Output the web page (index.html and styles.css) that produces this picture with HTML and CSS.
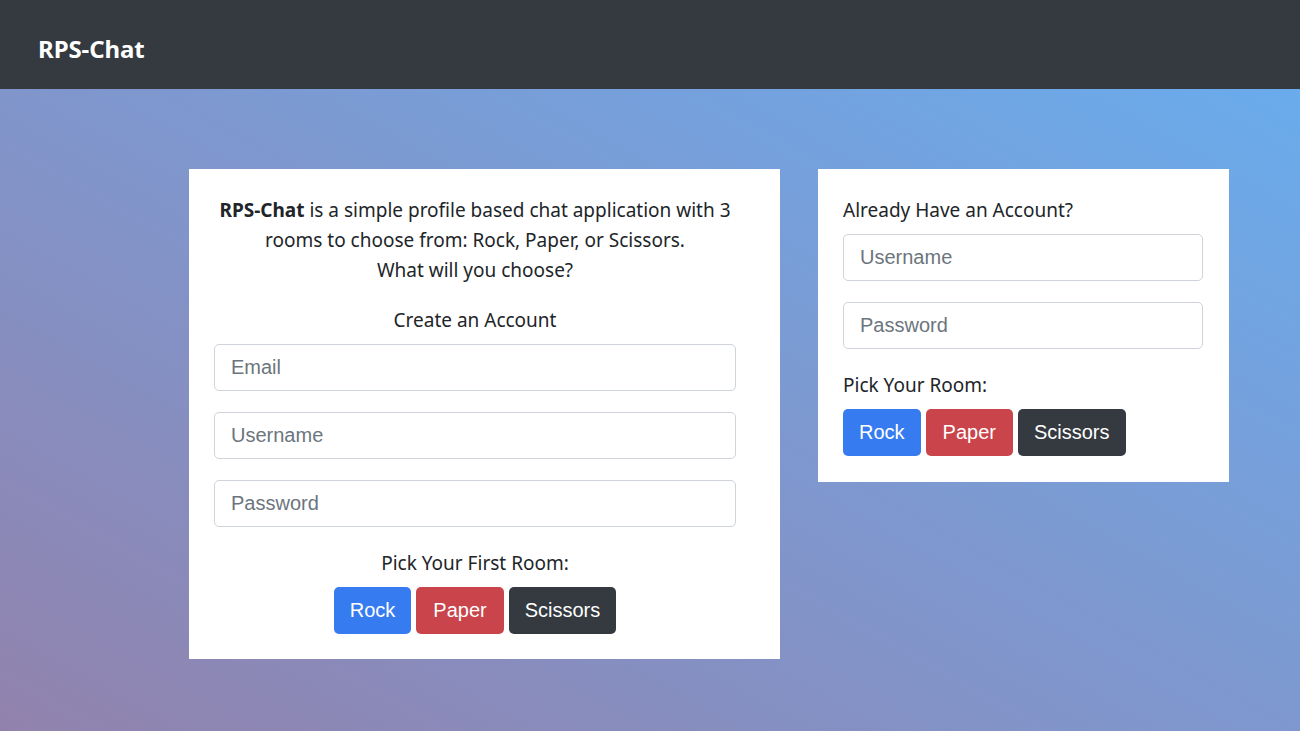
FILE: index.html
```html
<!DOCTYPE html>
<html lang="en">
<head>
<meta charset="utf-8">
<title>RPS-Chat</title>
<link rel="stylesheet" href="styles.css">
</head>
<body>
<nav class="navbar"><span class="brand">RPS-Chat</span></nav>
<main class="main">
  <section class="card card-signup">
    <p class="intro"><strong>RPS-Chat</strong> is a simple profile based chat application with 3 rooms to choose from: Rock, Paper, or Scissors.<br>What will you choose?</p>
    <p class="label center">Create an Account</p>
    <input class="field" type="text" placeholder="Email">
    <input class="field" type="text" placeholder="Username">
    <input class="field" type="password" placeholder="Password">
    <p class="label center label-room">Pick Your First Room:</p>
    <div class="btns center-btns">
      <button class="btn btn-rock">Rock</button>
      <button class="btn btn-paper">Paper</button>
      <button class="btn btn-scissors">Scissors</button>
    </div>
  </section>
  <section class="card card-login">
    <p class="label">Already Have an Account?</p>
    <input class="field" type="text" placeholder="Username">
    <input class="field" type="password" placeholder="Password">
    <p class="label label-room2">Pick Your Room:</p>
    <div class="btns">
      <button class="btn btn-rock">Rock</button>
      <button class="btn btn-paper">Paper</button>
      <button class="btn btn-scissors">Scissors</button>
    </div>
  </section>
</main>
</body>
</html>
```
FILE: styles.css
```css
html, body {
  margin: 0;
  padding: 0;
  height: 100%;
}
body {
  font-family: "Noto Sans", "Open Sans", sans-serif;
  color: #212529;
  background: linear-gradient(to top right, #9182ad 0%, #7e98cf 50%, #67aef0 100%);
  min-height: 731px;
  display: flex;
  flex-direction: column;
}
.navbar {
  height: 89px;
  background: #343a40;
  display: flex;
  align-items: center;
  padding: 8px 0 0 38px;
  box-sizing: border-box;
  flex: none;
}
.brand {
  color: #fff;
  font-size: 24px;
  font-weight: 700;
  letter-spacing: -0.1px;
}
.main {
  flex: 1;
  display: flex;
  align-items: flex-start;
  gap: 38px;
  padding: 80px 0 0 189px;
}
.card {
  background: #fff;
  box-sizing: border-box;
}
.card-signup {
  width: 591px;
  height: 490px;
  padding: 26px 44px 26px 25px;
}
.card-login {
  width: 411px;
  height: 313px;
  padding: 26px 26px 26px 25px;
}
p {
  margin: 0;
}
.intro {
  text-align: center;
  font-size: 19px;
  line-height: 30px;
  margin: 0 0 20px;
}
.label {
  font-size: 19px;
  line-height: 30px;
  margin-bottom: 9px;
}
.center {
  text-align: center;
}
.label-room {
  margin-top: 7px;
  margin-bottom: 9px;
}
.label-room2 {
  margin-top: 0;
  margin-bottom: 9px;
}
.field {
  display: block;
  width: 100%;
  box-sizing: border-box;
  height: 47px;
  border: 1px solid #ced4da;
  border-radius: 5px;
  padding: 0 16px;
  font-family: "Liberation Sans", Arial, sans-serif;
  font-size: 20px;
  color: #495057;
  margin-bottom: 21px;
  background: #fff;
}
.field::placeholder {
  color: #6c757d;
}
.btns {
  display: flex;
  gap: 5px;
}
.center-btns {
  justify-content: center;
}
.btn {
  height: 47px;
  border: none;
  border-radius: 5px;
  padding: 0 16px;
  font-family: "Liberation Sans", Arial, sans-serif;
  font-size: 20px;
  color: #fff;
  cursor: pointer;
}
.btn-rock {
  background: #367cf0;
}
.btn-paper {
  background: #c9444b;
  padding: 0 17px;
}
.btn-scissors {
  background: #343a40;
}
```
